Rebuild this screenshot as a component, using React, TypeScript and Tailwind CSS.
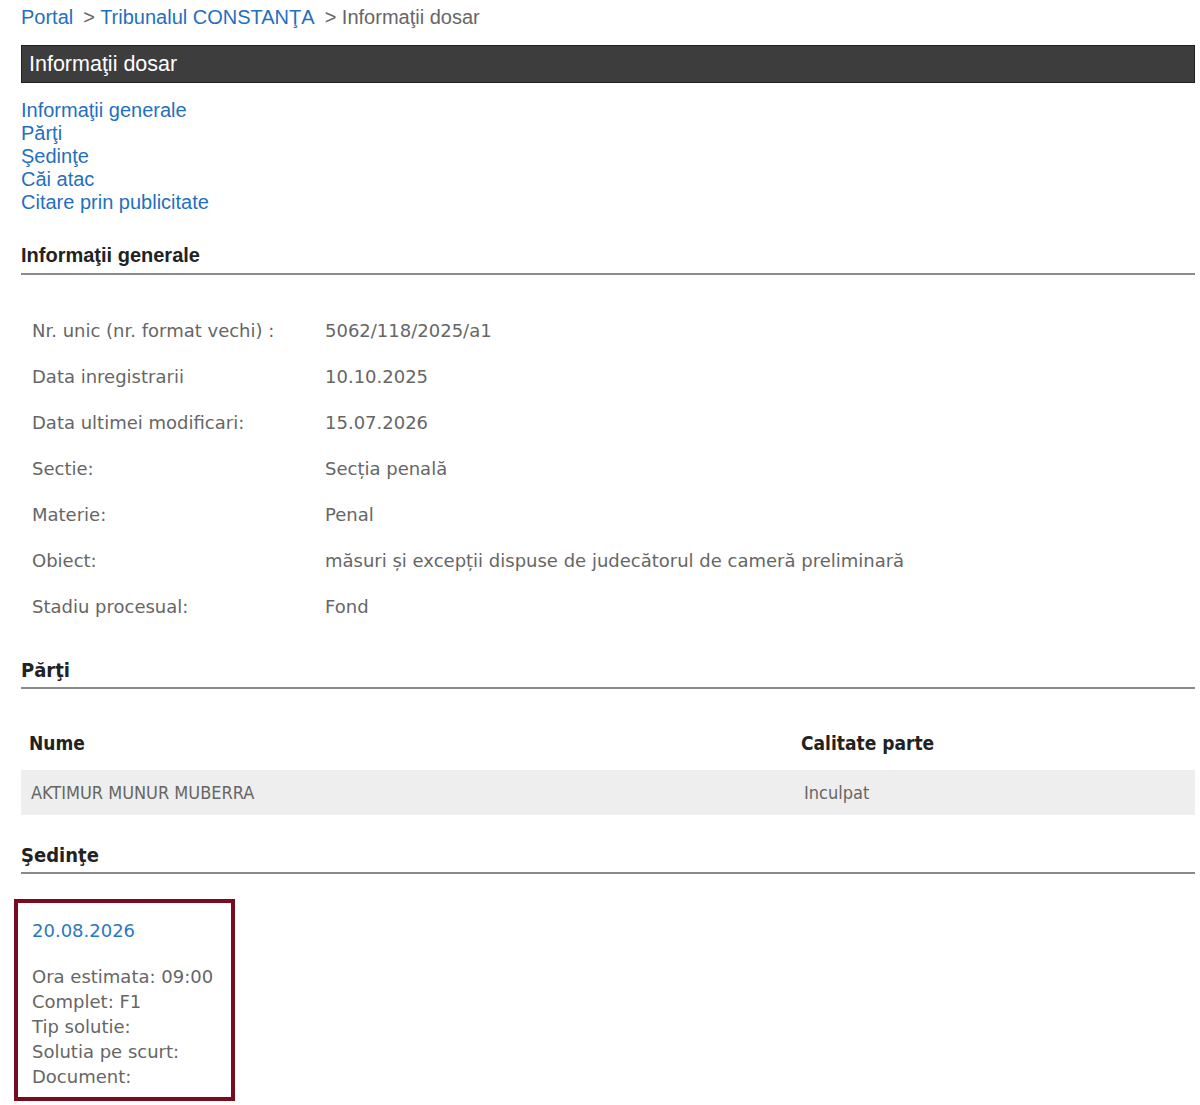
import React from "react";

const arial = { fontFamily: '"Liberation Sans", Arial, sans-serif' };
const verd = { fontFamily: '"DejaVu Sans", Verdana, sans-serif' };
const cond = { fontFamily: '"DejaVu Sans Condensed", "DejaVu Sans", sans-serif' };

const rows: [string, string][] = [
  ["Nr. unic (nr. format vechi) :", "5062/118/2025/a1"],
  ["Data inregistrarii", "10.10.2025"],
  ["Data ultimei modificari:", "15.07.2026"],
  ["Sectie:", "Secția penală"],
  ["Materie:", "Penal"],
  ["Obiect:", "măsuri și excepții dispuse de judecătorul de cameră preliminară"],
  ["Stadiu procesual:", "Fond"],
];

function Heading({ children, font, cls }: { children: React.ReactNode; font: React.CSSProperties; cls: string }) {
  return (
    <div className={`border-b-2 border-[#8a8a8a] ${cls}`}>
      <div className="text-[20px] font-bold text-[#222] leading-[24px]" style={font}>
        {children}
      </div>
    </div>
  );
}

export default function App() {
  return (
    <div className="bg-white w-[1200px] h-[1105px] overflow-hidden">
      <div className="ml-[21px] w-[1174px]">
        <div className="pt-[5px] h-[45px] text-[20px] leading-[24px] text-[#666]" style={arial}>
          <span className="text-[#1f70c1]">Portal</span>
          <span className="ml-[10px]">&gt; </span>
          <span className="text-[#1f70c1]">Tribunalul CONSTANŢA</span>
          <span className="ml-[10px]">&gt; Informaţii dosar</span>
        </div>
        <div className="h-[38px] bg-[#3d3d3d] border border-[#222] flex items-center pl-[7px] text-white text-[21.5px]" style={arial}>
          Informaţii dosar
        </div>
        <div className="mt-[16px] flex flex-col text-[20px] leading-[23px] text-[#1f70c1]" style={arial}>
          <span>Informaţii generale</span>
          <span>Părţi</span>
          <span>Şedinţe</span>
          <span>Căi atac</span>
          <span>Citare prin publicitate</span>
        </div>
        <Heading font={arial} cls="mt-[29px] pb-[6px]">Informaţii generale</Heading>
        <div className="mt-[32px] text-[18px] text-[#666]" style={verd}>
          {rows.map(([l, v]) => (
            <div key={l} className="flex h-[46px] items-center">
              <div className="w-[304px] pl-[11px]">{l}</div>
              <div>{v}</div>
            </div>
          ))}
        </div>
        <Heading font={cond} cls="mt-[29px] pb-[5px]">Părţi</Heading>
        <div className="mt-[39px] flex h-[31px] items-center text-[19px] font-bold text-[#222]" style={cond}>
          <div className="w-[780px] pl-[8px]">Nume</div>
          <div>Calitate parte</div>
        </div>
        <div className="mt-[11px] flex h-[45px] items-center bg-[#eeeeee] text-[18px] text-[#666]" style={cond}>
          <div className="w-[783px] pl-[10px]">AKTIMUR MUNUR MUBERRA</div>
          <div>Inculpat</div>
        </div>
        <Heading font={cond} cls="mt-[28px] pb-[5px]">Şedinţe</Heading>
      </div>
      <div className="ml-[14px] mt-[25px] w-[221px] h-[202px] border-[4px] border-[#7a0a1f] pl-[14px] pt-[15px] text-[18px] text-[#666]" style={verd}>
        <div className="text-[#2a78c4] leading-[25px]">20.08.2026</div>
        <div className="mt-[21px] flex flex-col leading-[25px]">
          <span>Ora estimata: 09:00</span>
          <span>Complet: F1</span>
          <span>Tip solutie:</span>
          <span>Solutia pe scurt:</span>
          <span>Document:</span>
        </div>
      </div>
    </div>
  );
}
